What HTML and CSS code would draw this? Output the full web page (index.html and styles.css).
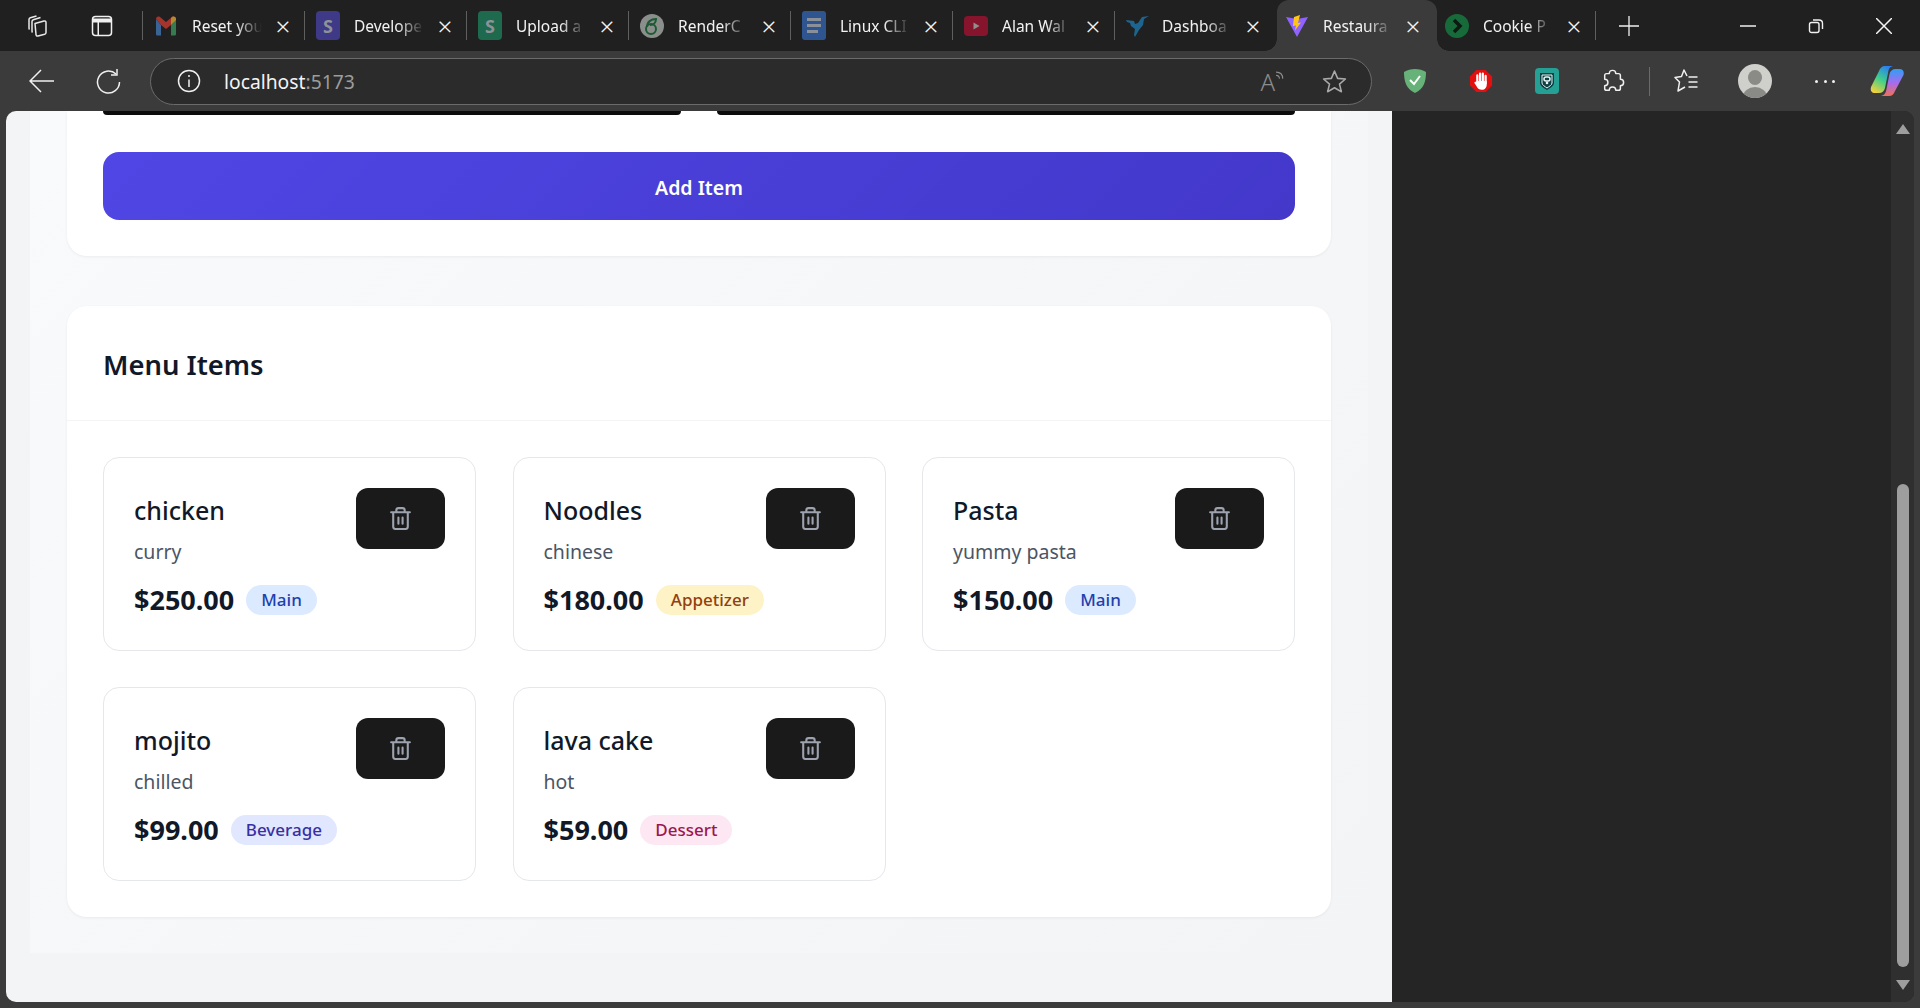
FILE: index.html
```html
<!DOCTYPE html>
<html lang="en">

<head>
    <meta charset="UTF-8">
    <meta name="viewport" content="width=device-width, initial-scale=1.0">
    <title>Restaurant Menu</title>
    <link rel="stylesheet" href="styles.css">
</head>

<body>
    <div class="tabstrip">
        <div class="strip-start">
            <svg class="strip-icon" viewBox="0 0 24 24" fill="none" stroke="#e8e8e8" stroke-width="1.5" stroke-linejoin="round">
                <path d="M9 9.5l9-2.5c1-.3 2 .3 2 1.400v10c0 1-.5 1.500-1.300 1.800L12 22c-1.100.3-2-.3-2-1.400z"/>
                <path d="M6.500 18.500C6 18 6 17.500 6 17V7.500c0-1 .5-1.500 1.300-1.800L14.500 3.500"/>
                <path d="M3.500 15.500C3 15 3 14.500 3 14V5.500c0-1 .5-1.500 1.300-1.800L10.500 2"/>
            </svg>
            <svg class="strip-icon" viewBox="0 0 24 24" fill="none" stroke="#f0f0f0" stroke-width="1.500">
                <rect x="2.500" y="2.500" width="19" height="19" rx="3"/>
                <path d="M3 4.500h18v4H9v13H7.500V8.500H3z" fill="#f0f0f0" stroke="none"/>
            </svg>
        </div>

        <div class="tab">
            <svg class="favicon" viewBox="0 0 24 24">
                <path d="M2 5v15c0 1 .7 1.500 1.500 1.500H7V11z" fill="#3a6496"/>
                <path d="M22 5v15c0 1-.7 1.500-1.500 1.500H17V11z" fill="#387a4f"/>
                <path d="M2 5c0-2 2-3 4-2l6 5 6-5c2-1 4 0 4 2l-5 6-5 4-5-4z" fill="#a5342c"/>
                <path d="M17 4l1-1c2-1 4 0 4 2v1l-5 5z" fill="#b08c2e"/>
            </svg>
            <span class="tab-title">Reset you</span>
            <span class="tab-close">×</span>
        </div>
        <div class="tab">
            <span class="favicon favicon-letter favicon-purple">S</span>
            <span class="tab-title">Develope</span>
            <span class="tab-close">×</span>
        </div>
        <div class="tab">
            <span class="favicon favicon-letter favicon-green">S</span>
            <span class="tab-title">Upload a</span>
            <span class="tab-close">×</span>
        </div>
        <div class="tab">
            <svg class="favicon" viewBox="0 0 24 24">
                <circle cx="12" cy="12" r="12" fill="#8b8f8c"/>
                <circle cx="11" cy="15" r="5" fill="none" stroke="#1c5a34" stroke-width="2"/>
                <path d="M7 13c0-5 4-8 9-8 0 4-3 6-6 6" fill="none" stroke="#1c5a34" stroke-width="2"/>
            </svg>
            <span class="tab-title">RenderC</span>
            <span class="tab-close">×</span>
        </div>
        <div class="tab">
            <svg class="favicon favicon-tall" viewBox="0 0 24 29">
                <rect width="24" height="29" rx="3" fill="#2f5590"/>
                <path d="M5 7h14v3H5zM5 13h14v3H5zM5 19h11v3H5z" fill="#8a8f98"/>
            </svg>
            <span class="tab-title">Linux CLI</span>
            <span class="tab-close">×</span>
        </div>
        <div class="tab">
            <svg class="favicon" viewBox="0 0 24 24">
                <rect y="2" width="24" height="20" rx="4" fill="#86142c"/>
                <path d="M9.500 8.500l6 3.500-6 3.500z" fill="#8f8f8f"/>
            </svg>
            <span class="tab-title">Alan Wal</span>
            <span class="tab-close">×</span>
        </div>
        <div class="tab tab-before-active">
            <svg class="favicon" viewBox="0 0 24 24">
                <path d="M0 6l8 1 1 3 3-1 4-6 7-1-5 3-1 6-4 5-4 7-1-2 1-6-4-3-1-3-3-1z" fill="#1d658e"/>
            </svg>
            <span class="tab-title">Dashboa</span>
            <span class="tab-close">×</span>
        </div>
        <div class="tab tab-active">
            <svg class="favicon" viewBox="0 0 24 24">
                <path d="M1 3l11 2 11-2-11 20z" fill="#8f63ff"/>
                <path d="M15 1L9 3 8 12l3-.5-1 5 6-8-3 .5z" fill="#ffc517"/>
            </svg>
            <span class="tab-title">Restaura</span>
            <span class="tab-close">×</span>
        </div>
        <div class="tab tab-last">
            <svg class="favicon" viewBox="0 0 24 24">
                <circle cx="12" cy="12" r="12" fill="#176b3a"/>
                <path d="M9 6l6 6-6 6" fill="none" stroke="#0d1a12" stroke-width="3.500"/>
            </svg>
            <span class="tab-title">Cookie P</span>
            <span class="tab-close">×</span>
        </div>
        <svg class="new-tab" viewBox="0 0 20 20" stroke="#f0f0f0" stroke-width="1.300"><path d="M10 0v20M0 10h20"/></svg>

        <div class="window-controls">
            <svg class="win-btn" viewBox="0 0 16 16" stroke="#f0f0f0" stroke-width="1.500"><path d="M0 8h16"/></svg>
            <svg class="win-btn" viewBox="0 0 16 16" fill="none" stroke="#f0f0f0" stroke-width="1.400">
                <rect x="1.500" y="4.500" width="9.500" height="10" rx="2"/>
                <path d="M5 2h6c2 0 3.500 1.500 3.500 3.500V11"/>
            </svg>
            <svg class="win-btn" viewBox="0 0 16 16" stroke="#f4f4f4" stroke-width="1.500"><path d="M0 0l16 16M16 0L0 16"/></svg>
        </div>
    </div>

    <div class="toolbar">
        <svg class="tool-icon tool-back" viewBox="0 0 26 26" fill="none" stroke="#f0f0f0" stroke-width="1.500">
            <path d="M1 13h24M12 2L1 13l11 11"/>
        </svg>
        <svg class="tool-icon tool-reload" viewBox="0 0 26 26" fill="none" stroke="#f0f0f0" stroke-width="1.500">
            <path d="M21 6a11 11 0 1 0 3.500 8"/>
            <path d="M22 1v6h-6"/>
        </svg>
        <div class="address-bar">
            <svg class="info-icon" viewBox="0 0 24 24" fill="none" stroke="#f0f0f0" stroke-width="1.500">
                <circle cx="12" cy="12" r="10.500"/>
                <path d="M12 10.500V18"/>
                <circle cx="12" cy="7" r="1" fill="#f0f0f0" stroke="none"/>
            </svg>
            <span class="address-text">localhost<span class="address-port">:5173</span></span>
            <span class="read-aloud">A<svg class="read-waves" viewBox="0 0 10 10" fill="none" stroke="#8c8c8c" stroke-width="1"><path d="M1 4c2 0 3 1 3 3M1 1c4 0 6 2 6 6"/></svg></span>
            <svg class="star-icon" viewBox="0 0 24 24" fill="none" stroke="#a8a8a8" stroke-width="1.500" stroke-linejoin="round">
                <path d="M12 2l3 7 7.500.6-5.700 4.900 1.800 7.300L12 18l-6.600 3.800 1.800-7.300L1.500 9.600 9 9z"/>
            </svg>
        </div>
        <svg class="ext-icon ext-adguard" viewBox="0 0 24 26">
            <path d="M12 1C8 1 4 2 1 4c0 9 2 17 11 21 9-4 11-12 11-21-3-2-7-3-11-3z" fill="#67b279"/>
            <path d="M7 12l4 4 6-8" fill="none" stroke="#fff" stroke-width="2"/>
        </svg>
        <svg class="ext-icon ext-hand" viewBox="0 0 26 26">
            <path d="M8 1h10l7 7v10l-7 7H8l-7-7V8z" fill="#e40f0f"/>
            <path d="M9 7v8M12 5v8M15 5v8M18 7.500v8" fill="none" stroke="#fff" stroke-width="2.400" stroke-linecap="round"/>
            <path d="M7.800 13h11.400v4c0 3-2 5.500-5.200 5.500-3 0-4.300-1-5.700-3.500L6 15.500c-.6-1.200.8-2.200 1.800-1.200z" fill="#fff"/>
        </svg>
        <svg class="ext-icon ext-shield" viewBox="0 0 24 26">
            <rect width="24" height="26" rx="4" fill="#24a194"/>
            <path d="M5 5h14v10c0 3-4 5-7 7-3-2-7-4-7-7z" fill="#0e3f43"/>
            <path d="M7 7h10v8c0 2-3 3.500-5 5-2-1.500-5-3-5-5z" fill="none" stroke="#e8f6f3" stroke-width="1"/>
            <rect x="9" y="9" width="6" height="4" rx="2" fill="none" stroke="#e8f6f3" stroke-width="1.500"/>
            <circle cx="12" cy="15" r="1.300" fill="#e8f6f3"/>
        </svg>
        <svg class="ext-icon ext-puzzle" viewBox="0 0 26 28" fill="none" stroke="#f0f0f0" stroke-width="1.600" stroke-linejoin="round">
            <path d="M9 6a3.500 3.500 0 0 1 7 0h3a2 2 0 0 1 2 2v4a3.500 3.500 0 0 1 0 7v3a2 2 0 0 1-2 2h-3a3.500 3.500 0 0 0-7 0H6a2 2 0 0 1-2-2v-3a3.500 3.500 0 0 0 0-7V8a2 2 0 0 1 2-2z"/>
        </svg>
        <span class="tool-divider"></span>
        <svg class="ext-icon ext-favs" viewBox="0 0 24 24" fill="none" stroke="#f0f0f0" stroke-width="1.500" stroke-linejoin="round">
            <path d="M13 7L10 1 7.500 7.500 1 8.500 5.500 13 4 22l7-4"/>
            <path d="M14.500 8h9M14.500 13h9M14.500 18h9"/>
        </svg>
        <div class="avatar">
            <span class="avatar-head"></span>
            <span class="avatar-body"></span>
        </div>
        <div class="more-dots"><span></span><span></span><span></span></div>
        <svg class="ext-icon ext-copilot" viewBox="0 0 34 32">
            <defs>
                <linearGradient id="copilotA" x1="0.700" y1="0" x2="0.200" y2="1">
                    <stop offset="0" stop-color="#2b7ff0"/>
                    <stop offset="0.500" stop-color="#3fd08c"/>
                    <stop offset="1" stop-color="#f7d13a"/>
                </linearGradient>
                <linearGradient id="copilotB" x1="0.500" y1="0" x2="0.500" y2="1">
                    <stop offset="0" stop-color="#2f9ff5"/>
                    <stop offset="0.500" stop-color="#a46cf0"/>
                    <stop offset="1" stop-color="#f0705a"/>
                </linearGradient>
            </defs>
            <path d="M9 6c1-3 3-5 6-5h8c-4 1-4.500 4-5 7l-3 15c-.6 3-3 5-6 5H5c-3 0-5-2-4-6z" fill="url(#copilotA)"/>
            <path d="M25 26c-1 3-3 5-6 5h-8c4-1 5-4 5.500-7l3-15c.6-3 3-5 6-5h4c3 0 5 2 4 6z" fill="url(#copilotB)"/>
        </svg>
    </div>

    <div class="viewport">
        <div class="app-area">
            <main class="app-inner">
                <section class="panel form-panel">
                    <div class="input-stubs">
                        <div class="input-stub"></div>
                        <div class="input-stub"></div>
                    </div>
                    <button class="add-btn">Add Item</button>
                </section>

                <section class="panel menu-panel">
                    <h2 class="menu-title">Menu Items</h2>
                    <div class="menu-grid">
                        <article class="item-card">
                            <div class="item-info">
                                <h3 class="item-name">chicken</h3>
                                <p class="item-desc">curry</p>
                                <div class="item-meta">
                                    <span class="item-price">$250.00</span>
                                    <span class="badge badge-main">Main</span>
                                </div>
                            </div>
                            <button class="delete-btn">
                                <svg class="trash" viewBox="0 0 24 24"><path d="M3 6h18M19 6v14c0 1-1 2-2 2H7c-1 0-2-1-2-2V6M8 6V4c0-1 1-2 2-2h4c1 0 2 1 2 2v2M10 11v6M14 11v6"/></svg>
                            </button>
                        </article>
                        <article class="item-card">
                            <div class="item-info">
                                <h3 class="item-name">Noodles</h3>
                                <p class="item-desc">chinese</p>
                                <div class="item-meta">
                                    <span class="item-price">$180.00</span>
                                    <span class="badge badge-appetizer">Appetizer</span>
                                </div>
                            </div>
                            <button class="delete-btn">
                                <svg class="trash" viewBox="0 0 24 24"><path d="M3 6h18M19 6v14c0 1-1 2-2 2H7c-1 0-2-1-2-2V6M8 6V4c0-1 1-2 2-2h4c1 0 2 1 2 2v2M10 11v6M14 11v6"/></svg>
                            </button>
                        </article>
                        <article class="item-card">
                            <div class="item-info">
                                <h3 class="item-name">Pasta</h3>
                                <p class="item-desc">yummy pasta</p>
                                <div class="item-meta">
                                    <span class="item-price">$150.00</span>
                                    <span class="badge badge-main">Main</span>
                                </div>
                            </div>
                            <button class="delete-btn">
                                <svg class="trash" viewBox="0 0 24 24"><path d="M3 6h18M19 6v14c0 1-1 2-2 2H7c-1 0-2-1-2-2V6M8 6V4c0-1 1-2 2-2h4c1 0 2 1 2 2v2M10 11v6M14 11v6"/></svg>
                            </button>
                        </article>
                        <article class="item-card">
                            <div class="item-info">
                                <h3 class="item-name">mojito</h3>
                                <p class="item-desc">chilled</p>
                                <div class="item-meta">
                                    <span class="item-price">$99.00</span>
                                    <span class="badge badge-beverage">Beverage</span>
                                </div>
                            </div>
                            <button class="delete-btn">
                                <svg class="trash" viewBox="0 0 24 24"><path d="M3 6h18M19 6v14c0 1-1 2-2 2H7c-1 0-2-1-2-2V6M8 6V4c0-1 1-2 2-2h4c1 0 2 1 2 2v2M10 11v6M14 11v6"/></svg>
                            </button>
                        </article>
                        <article class="item-card">
                            <div class="item-info">
                                <h3 class="item-name">lava cake</h3>
                                <p class="item-desc">hot</p>
                                <div class="item-meta">
                                    <span class="item-price">$59.00</span>
                                    <span class="badge badge-dessert">Dessert</span>
                                </div>
                            </div>
                            <button class="delete-btn">
                                <svg class="trash" viewBox="0 0 24 24"><path d="M3 6h18M19 6v14c0 1-1 2-2 2H7c-1 0-2-1-2-2V6M8 6V4c0-1 1-2 2-2h4c1 0 2 1 2 2v2M10 11v6M14 11v6"/></svg>
                            </button>
                        </article>
                    </div>
                </section>
            </main>
        </div>

        <div class="side-panel">
            <div class="scrollbar">
                <span class="scroll-arrow scroll-up"></span>
                <span class="scroll-thumb"></span>
                <span class="scroll-arrow scroll-down"></span>
            </div>
        </div>
    </div>
</body>

</html>
```

FILE: styles.css
```css
* {
    box-sizing: border-box;
}

html,
body {
    height: 100%;
}

body {
    margin: 0;
    height: 1008px;
    overflow: hidden;
    display: flex;
    flex-direction: column;
    background-color: #3b3b3b;
    font-family: 'Noto Sans', 'Open Sans', sans-serif;
}

/* browser chrome: tabs */
.tabstrip {
    height: 51px;
    flex: none;
    display: flex;
    align-items: center;
    background-color: #202020;
}

.strip-start {
    width: 143px;
    flex: none;
    display: flex;
    align-items: center;
    gap: 40px;
    padding-left: 26px;
    height: 29px;
    border-right: 1px solid #5f5f5f;
}

.strip-icon {
    width: 24px;
    height: 24px;
}

.tab {
    position: relative;
    width: 162px;
    flex: none;
    display: flex;
    align-items: center;
    height: 29px;
    padding-left: 11px;
    border-right: 1px solid #5f5f5f;
    color: #f2f2f2;
    font-size: 15.5px;
}

.favicon {
    width: 24px;
    height: 24px;
    flex: none;
    margin-right: 14px;
}

.favicon-tall {
    height: 29px;
}

.favicon-letter {
    display: flex;
    align-items: center;
    justify-content: center;
    height: 29px;
    border-radius: 4px;
    font-size: 18px;
    font-weight: 700;
    color: #8f9296;
}

.favicon-purple {
    background-color: #3e3a87;
}

.favicon-green {
    background-color: #1e6a4e;
}

/* long titles fade out before the close button */
.tab-title {
    width: 76px;
    flex: none;
    white-space: nowrap;
    -webkit-mask-image: linear-gradient(to right, #000 58%, transparent 92%);
    mask-image: linear-gradient(to right, #000 58%, transparent 92%);
}

.tab-close {
    margin-left: 5px;
    width: 20px;
    flex: none;
    text-align: center;
    font-size: 26px;
    font-weight: 300;
    line-height: 24px;
    color: #f2f2f2;
}

.tab-before-active {
    border-right: none;
}

.tab-before-active .favicon {
    margin-right: 12px;
}

.tab-active {
    width: 160px;
    height: 51px;
    padding-left: 8px;
    border-right: none;
    border-radius: 12px 12px 0 0;
    background-color: #3b3b3b;
}

.tab-active::before,
.tab-active::after {
    content: "";
    position: absolute;
    bottom: 0;
    width: 12px;
    height: 12px;
    background: radial-gradient(circle at 0 0, #202020 11.500px, #3b3b3b 12px);
}

.tab-active::before {
    left: -12px;
}

.tab-active::after {
    right: -12px;
    background: radial-gradient(circle at 100% 0, #202020 11.500px, #3b3b3b 12px);
}

.tab-active .tab-close {
    margin-left: 4px;
}

.tab-last {
    width: 159px;
    padding-left: 8px;
}

.tab-last .tab-close {
    margin-left: 5px;
}

.new-tab {
    width: 20px;
    height: 20px;
    margin-left: 23px;
    flex: none;
}

.window-controls {
    margin-left: auto;
    display: flex;
    align-items: center;
    gap: 52px;
    padding-right: 28px;
}

.win-btn {
    width: 16px;
    height: 16px;
}

/* browser chrome: address row */
.toolbar {
    height: 60px;
    flex: none;
    display: flex;
    align-items: center;
    background-color: #3b3b3b;
    padding-left: 29px;
}

.tool-icon {
    width: 26px;
    height: 26px;
    flex: none;
}

.tool-reload {
    margin-left: 40px;
}

.address-bar {
    margin-left: 29px;
    width: 1222px;
    height: 47px;
    flex: none;
    display: flex;
    align-items: center;
    padding-left: 26px;
    padding-right: 24px;
    border: 1.500px solid #6b6b6b;
    border-radius: 24px;
    background-color: #2b2b2b;
}

.info-icon {
    width: 24px;
    height: 24px;
    flex: none;
}

.address-text {
    margin-left: 23px;
    font-size: 19.300px;
    color: #f4f4f4;
}

.address-port {
    color: #9c9c9c;
}

.read-aloud {
    margin-left: auto;
    display: flex;
    align-items: flex-start;
    font-size: 24px;
    font-weight: 300;
    color: #8c8c8c;
}

.read-waves {
    width: 11px;
    height: 11px;
    margin-top: 6px;
}

.star-icon {
    width: 25px;
    height: 25px;
    margin-left: 36px;
    flex: none;
}

.ext-icon {
    width: 24px;
    height: 26px;
    flex: none;
}

.ext-adguard {
    margin-left: 31px;
}

.ext-hand {
    margin-left: 42px;
}

.ext-shield {
    margin-left: 42px;
}

.ext-puzzle {
    margin-left: 42px;
}

.tool-divider {
    width: 1px;
    height: 29px;
    margin-left: 24px;
    background-color: #6a6a6a;
    flex: none;
}

.ext-favs {
    margin-left: 24px;
}

.avatar {
    position: relative;
    overflow: hidden;
    width: 34px;
    height: 34px;
    margin-left: 40px;
    flex: none;
    border-radius: 50%;
    background-color: #cfcfcb;
}

.avatar-head {
    position: absolute;
    left: 10px;
    top: 6px;
    width: 14px;
    height: 15px;
    border-radius: 50%;
    background-color: #8a8a86;
}

.avatar-body {
    position: absolute;
    left: 5px;
    top: 23px;
    width: 24px;
    height: 20px;
    border-radius: 50%;
    background-color: #8a8a86;
}

.more-dots {
    margin-left: 43px;
    width: 20px;
    flex: none;
    display: flex;
    justify-content: space-between;
}

.more-dots span {
    width: 3px;
    height: 3px;
    border-radius: 50%;
    background-color: #f0f0f0;
}

.ext-copilot {
    width: 34px;
    height: 32px;
    margin-left: 35px;
}

/* page area */
.viewport {
    height: 891px;
    margin-left: 6px;
    margin-right: 6px;
    flex: none;
    display: flex;
    border-radius: 10px;
    overflow: hidden;
}

.app-area {
    width: 1386px;
    flex: none;
    overflow: hidden;
    padding-left: 24px;
    padding-right: 24px;
    padding-bottom: 49px;
    background-color: #f3f4f6;
}

.app-inner {
    height: 100%;
    padding: 0 37px;
    background: linear-gradient(135deg, #f9fafb, #f3f4f6);
    display: flex;
    flex-direction: column;
    gap: 50px;
}

.panel {
    background: white;
    border-radius: 20px;
    box-shadow: 0 1px 3px rgba(0, 0, 0, 0.06);
}

.form-panel {
    height: 145px;
    padding: 0 36px;
    border-radius: 0 0 20px 20px;
}

.input-stubs {
    display: grid;
    grid-template-columns: 1fr 1fr;
    gap: 36px;
}

.input-stub {
    height: 4px;
    background-color: #0c0c0c;
    border-radius: 0 0 12px 12px;
}

.add-btn {
    width: 100%;
    height: 68px;
    margin-top: 37px;
    padding-top: 3px;
    border: none;
    border-radius: 16px;
    background: linear-gradient(135deg, #4f46e5, #4338ca);
    color: white;
    font-family: inherit;
    font-size: 19.500px;
    font-weight: 600;
}

.menu-panel {
    height: 611px;
}

.menu-title {
    height: 115px;
    margin: 0;
    padding: 2px 36px 0;
    display: flex;
    align-items: center;
    border-bottom: 1px solid #f3f4f6;
    color: #111827;
    font-size: 27.400px;
    font-weight: 600;
}

.menu-grid {
    display: grid;
    grid-template-columns: repeat(3, 373px);
    column-gap: 36.500px;
    row-gap: 36px;
    padding: 36px;
}

.item-card {
    height: 194px;
    display: flex;
    justify-content: space-between;
    align-items: flex-start;
    padding: 30px;
    border: 1px solid #e5e7eb;
    border-radius: 16px;
}

.item-name {
    margin: 0;
    height: 40px;
    line-height: 44px;
    color: #111827;
    font-size: 25px;
    font-weight: 500;
}

.item-desc {
    margin: 9px 0 0;
    line-height: 30px;
    color: #4b5563;
    font-size: 19.500px;
}

.item-meta {
    margin-top: 14px;
    display: flex;
    align-items: center;
    gap: 12px;
}

.item-price {
    color: #111827;
    font-size: 27px;
    font-weight: 700;
}

.badge {
    height: 30px;
    display: flex;
    align-items: center;
    padding: 0 15px;
    border-radius: 15px;
    font-size: 17px;
    font-weight: 500;
}

.badge-main {
    background-color: #dbeafe;
    color: #1e40af;
}

.badge-appetizer {
    background-color: #fef3c7;
    color: #92400e;
}

.badge-beverage {
    background-color: #e0e7ff;
    color: #3730a3;
}

.badge-dessert {
    background-color: #fce7f3;
    color: #9d174d;
}

.delete-btn {
    width: 89px;
    height: 61px;
    flex: none;
    display: flex;
    align-items: center;
    justify-content: center;
    padding: 0;
    border: none;
    border-radius: 12px;
    background-color: #1a1a1a;
}

.trash {
    width: 25px;
    height: 25px;
    fill: none;
    stroke: #9ca3af;
    stroke-width: 2;
    stroke-linecap: round;
    stroke-linejoin: round;
}

.side-panel {
    flex: 1;
    display: flex;
    justify-content: flex-end;
    background-color: #252525;
}

.scrollbar {
    position: relative;
    width: 23px;
    background-color: #2f2f2f;
}

.scroll-thumb {
    position: absolute;
    left: 6px;
    top: 373px;
    width: 12px;
    height: 483px;
    border-radius: 6px;
    background-color: #9e9e9e;
}

.scroll-arrow {
    position: absolute;
    left: 5px;
    width: 0;
    height: 0;
    border-left: 7px solid transparent;
    border-right: 7px solid transparent;
}

.scroll-up {
    top: 13px;
    border-bottom: 10px solid #9e9e9e;
}

.scroll-down {
    top: 869px;
    border-top: 10px solid #9e9e9e;
}
```
